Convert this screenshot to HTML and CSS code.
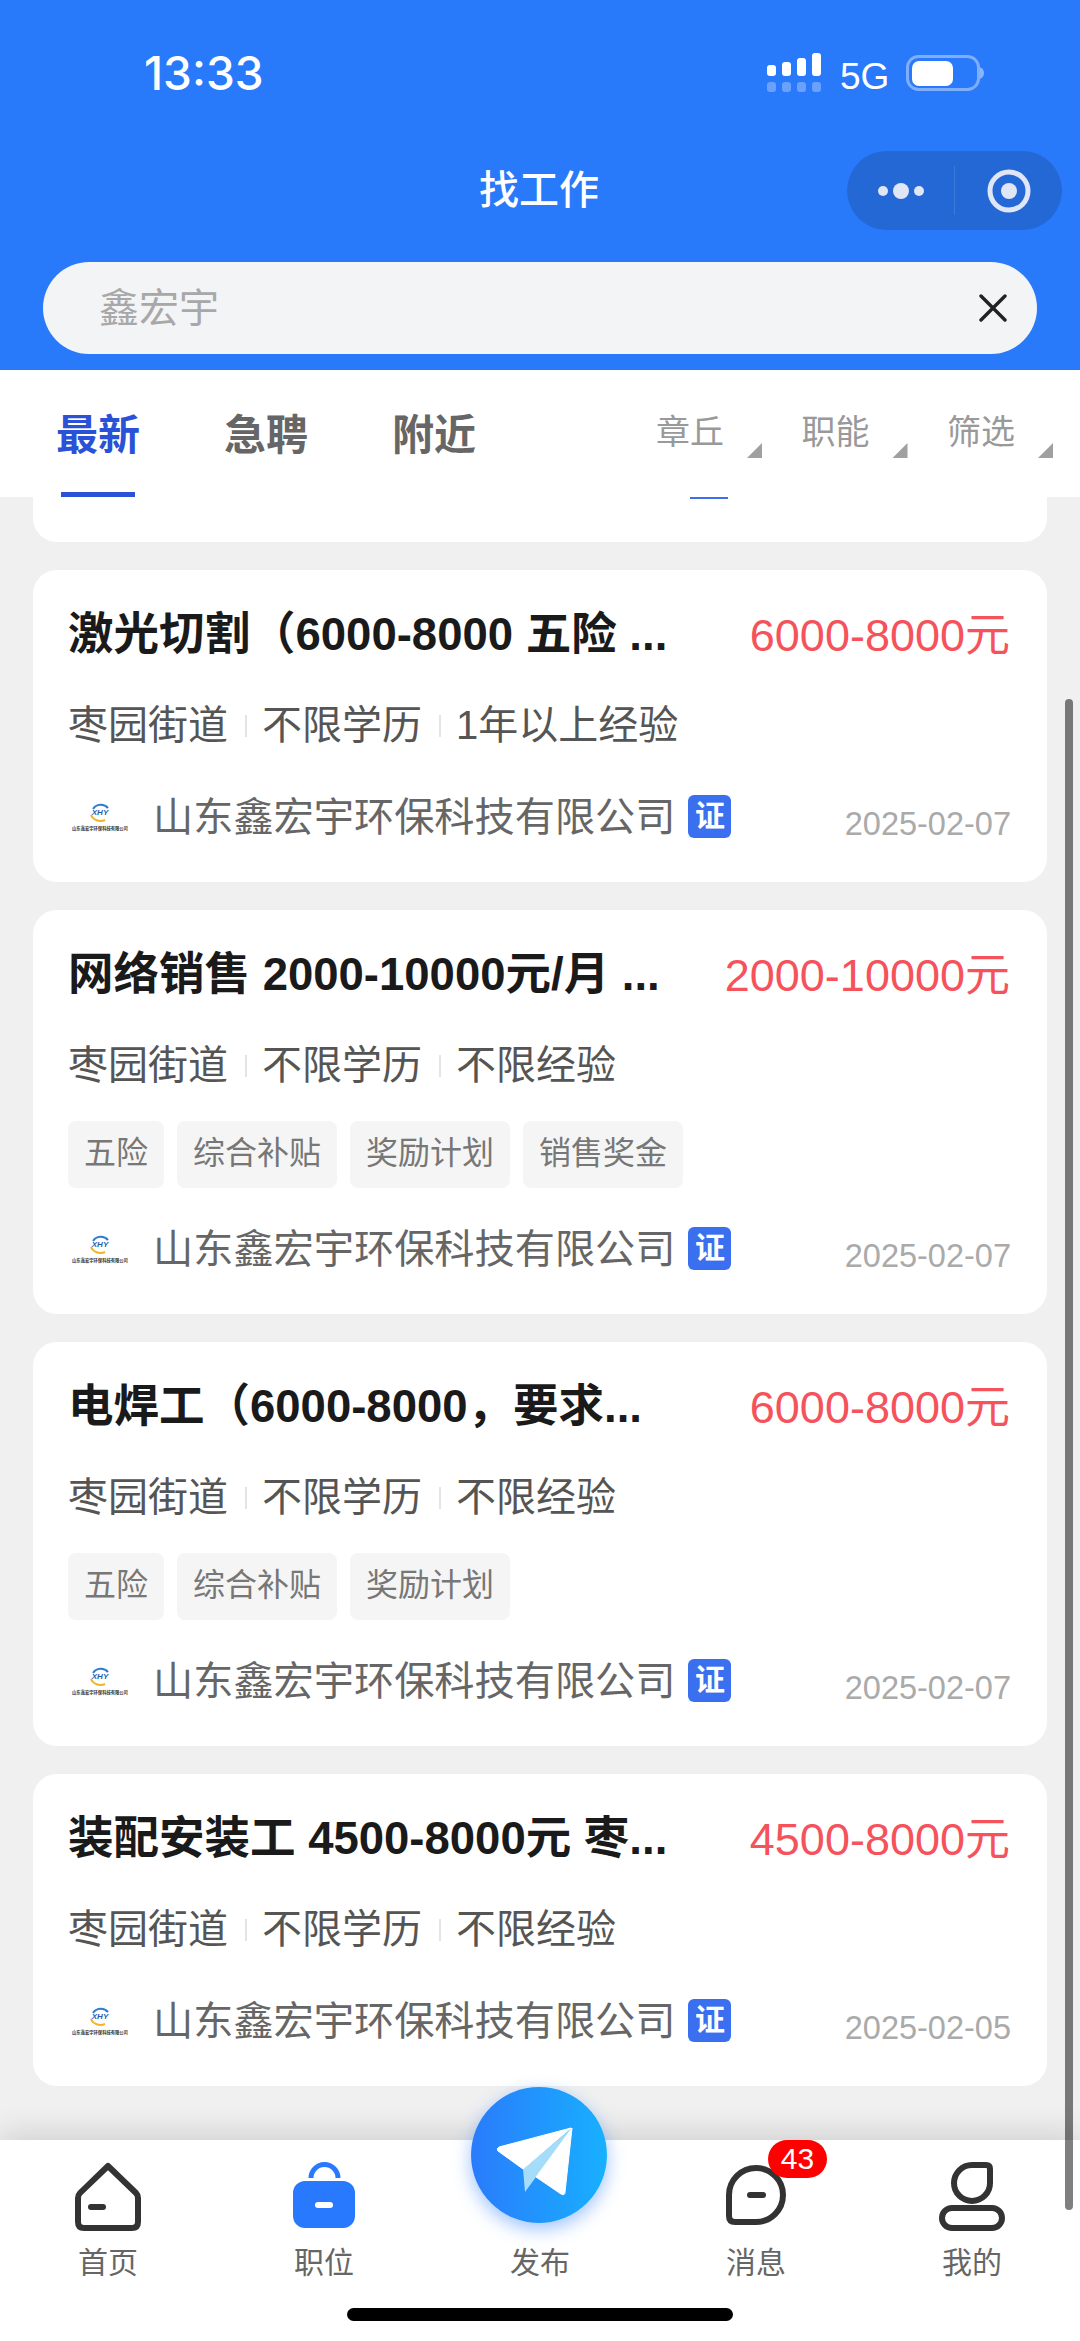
FILE: index.html
```html
<!DOCTYPE html>
<html lang="zh-CN">
<head>
    <meta charset="UTF-8">
    <meta name="viewport" content="width=device-width, initial-scale=1.0">
    <title>找工作</title>
    <link rel="stylesheet" href="styles.css">
</head>
<body>
    <svg class="defs" width="0" height="0">
        <symbol id="emblem" viewBox="0 0 24 20">
            <path d="M5 6 A9 8.5 0 0 1 20 5" fill="none" stroke="#2a7fc9" stroke-width="2"/>
            <path d="M3 12 A10 8.5 0 0 0 17 17" fill="none" stroke="#f0b429" stroke-width="2"/>
        </symbol>
    </svg>

    <div class="page">
        <header class="header">
            <div class="status">
                <span class="time">13:33</span>
                <div class="status-right">
                    <svg class="signal" width="56" height="40" viewBox="0 0 56 40">
                        <g fill="#fff">
                            <rect x="1" y="12" width="9" height="11" rx="3"/>
                            <rect x="16" y="9" width="9" height="14" rx="3"/>
                            <rect x="31" y="5" width="9" height="18" rx="3"/>
                            <rect x="46" y="0" width="9" height="23" rx="3"/>
                        </g>
                        <g fill="#fff" opacity="0.3">
                            <rect x="1" y="29" width="9" height="10" rx="3"/>
                            <rect x="16" y="29" width="9" height="10" rx="3"/>
                            <rect x="31" y="29" width="9" height="10" rx="3"/>
                            <rect x="46" y="29" width="9" height="10" rx="3"/>
                        </g>
                    </svg>
                    <span class="net">5G</span>
                    <svg class="battery" width="79" height="36" viewBox="0 0 79 36">
                        <rect x="1.5" y="1.5" width="71" height="33" rx="11" fill="none" stroke="#fff" stroke-opacity="0.4" stroke-width="3"/>
                        <rect x="6" y="6" width="41" height="25" rx="7" fill="#fff"/>
                        <path d="M74 12 Q78 14 78 18 Q78 22 74 24 Z" fill="#fff" fill-opacity="0.45"/>
                    </svg>
                </div>
            </div>
            <div class="navbar">
                <h1 class="nav-title">找工作</h1>
                <div class="capsule">
                    <svg width="56" height="20" viewBox="0 0 56 20">
                        <g fill="#e0e6f5">
                            <circle cx="9" cy="10" r="5"/>
                            <circle cx="27" cy="10" r="8"/>
                            <circle cx="45" cy="10" r="5"/>
                        </g>
                    </svg>
                    <span class="capsule-line"></span>
                    <svg width="44" height="44" viewBox="0 0 44 44">
                        <circle cx="22" cy="22" r="19" fill="none" stroke="#e0e6f5" stroke-width="5"/>
                        <circle cx="22" cy="22" r="8" fill="#e0e6f5"/>
                    </svg>
                </div>
            </div>
            <div class="search">
                <span class="search-text">鑫宏宇</span>
                <svg width="30" height="28" viewBox="0 0 30 28">
                    <path d="M3 2 L27 26 M27 2 L3 26" stroke="#222" stroke-width="3.4" stroke-linecap="round"/>
                </svg>
            </div>
        </header>

        <nav class="tabs">
            <a class="tab active">最新</a>
            <a class="tab">急聘</a>
            <a class="tab">附近</a>
            <div class="filters">
                <div class="filter"><span>章丘</span><i class="corner"></i></div>
                <div class="filter"><span>职能</span><i class="corner"></i></div>
                <div class="filter"><span>筛选</span><i class="corner"></i></div>
            </div>
        </nav>

        <main class="list">
            <div class="card card-clipped"><span class="clipped-badge"></span></div>

            <div class="card">
                <div class="job-top">
                    <h2 class="job-title">激光切割（6000-8000 五险 ...</h2>
                    <span class="job-pay">6000-8000元</span>
                </div>
                <div class="job-info"><span>枣园街道</span><span>不限学历</span><span>1年以上经验</span></div>
                <div class="job-company">
                    <div class="logo"><svg width="24" height="20"><use href="#emblem"/></svg><b class="logo-mark">XHY</b><span class="logo-name">山东鑫宏宇环保科技有限公司</span></div>
                    <span class="company-name">山东鑫宏宇环保科技有限公司</span>
                    <span class="verified">证</span>
                    <span class="job-date">2025-02-07</span>
                </div>
            </div>

            <div class="card">
                <div class="job-top">
                    <h2 class="job-title">网络销售 2000-10000元/月 ...</h2>
                    <span class="job-pay">2000-10000元</span>
                </div>
                <div class="job-info"><span>枣园街道</span><span>不限学历</span><span>不限经验</span></div>
                <div class="job-tags"><span>五险</span><span>综合补贴</span><span>奖励计划</span><span>销售奖金</span></div>
                <div class="job-company">
                    <div class="logo"><svg width="24" height="20"><use href="#emblem"/></svg><b class="logo-mark">XHY</b><span class="logo-name">山东鑫宏宇环保科技有限公司</span></div>
                    <span class="company-name">山东鑫宏宇环保科技有限公司</span>
                    <span class="verified">证</span>
                    <span class="job-date">2025-02-07</span>
                </div>
            </div>

            <div class="card">
                <div class="job-top">
                    <h2 class="job-title">电焊工（6000-8000，要求...</h2>
                    <span class="job-pay">6000-8000元</span>
                </div>
                <div class="job-info"><span>枣园街道</span><span>不限学历</span><span>不限经验</span></div>
                <div class="job-tags"><span>五险</span><span>综合补贴</span><span>奖励计划</span></div>
                <div class="job-company">
                    <div class="logo"><svg width="24" height="20"><use href="#emblem"/></svg><b class="logo-mark">XHY</b><span class="logo-name">山东鑫宏宇环保科技有限公司</span></div>
                    <span class="company-name">山东鑫宏宇环保科技有限公司</span>
                    <span class="verified">证</span>
                    <span class="job-date">2025-02-07</span>
                </div>
            </div>

            <div class="card">
                <div class="job-top">
                    <h2 class="job-title">装配安装工 4500-8000元 枣...</h2>
                    <span class="job-pay">4500-8000元</span>
                </div>
                <div class="job-info"><span>枣园街道</span><span>不限学历</span><span>不限经验</span></div>
                <div class="job-company">
                    <div class="logo"><svg width="24" height="20"><use href="#emblem"/></svg><b class="logo-mark">XHY</b><span class="logo-name">山东鑫宏宇环保科技有限公司</span></div>
                    <span class="company-name">山东鑫宏宇环保科技有限公司</span>
                    <span class="verified">证</span>
                    <span class="job-date">2025-02-05</span>
                </div>
            </div>
        </main>

        <footer class="tabbar">
            <div class="tabbar-items">
                <a class="bar-item">
                    <svg width="66" height="69" viewBox="0 0 66 69" fill="none" stroke="#333" stroke-width="6" stroke-linecap="round" stroke-linejoin="round">
                        <path d="M33 4 L61 31 Q63 33 63 36 V60 Q63 66 57 66 H9 Q3 66 3 60 V36 Q3 33 5 31 Z"/>
                        <path d="M16 45 H28"/>
                    </svg>
                    <span>首页</span>
                </a>
                <a class="bar-item">
                    <svg width="62" height="69" viewBox="0 0 62 69" fill="none">
                        <path d="M18 16 A13.5 13.5 0 0 1 45 16" stroke="#2979ff" stroke-width="5"/>
                        <rect x="0" y="19" width="62" height="47" rx="12" fill="#2979ff"/>
                        <path d="M25 43 H37" stroke="#fff" stroke-width="6" stroke-linecap="round"/>
                    </svg>
                    <span>职位</span>
                </a>
                <a class="bar-item">
                    <span class="bar-spacer"></span>
                    <span>发布</span>
                </a>
                <a class="bar-item">
                    <svg width="60" height="69" viewBox="0 0 60 69" fill="none" stroke="#333" stroke-width="6" stroke-linecap="round" stroke-linejoin="round">
                        <path d="M3 33 A27 27 0 1 1 30 60 H9 Q3 60 3 54 Z"/>
                        <path d="M24 33 H37"/>
                    </svg>
                    <span>消息</span>
                    <em class="bar-badge">43</em>
                </a>
                <a class="bar-item">
                    <svg width="66" height="69" viewBox="0 0 66 69" fill="none" stroke="#333" stroke-width="6" stroke-linejoin="round">
                        <path d="M33 3 H47 Q51 3 51 7 V21 A18 18 0 1 1 33 3 Z"/>
                        <rect x="3" y="46" width="60" height="20" rx="10"/>
                    </svg>
                    <span>我的</span>
                </a>
            </div>
            <div class="home-bar"></div>
            <button class="publish">
                <svg width="136" height="136" viewBox="0 0 136 136">
                    <path d="M101 41 L52 82 L54 105 L65 90 Z" fill="#a5dcfa"/>
                    <path d="M100 41 L28 60 Q25 62 27 64 L52 82 Z" fill="#fff" stroke="#fff" stroke-linejoin="round"/>
                    <path d="M101 41 L65 90 L90 107 Q94 109 94 105 Z" fill="#fff" stroke="#fff" stroke-linejoin="round"/>
                </svg>
            </button>
        </footer>

        <div class="scrollbar"></div>
    </div>
</body>
</html>
```

FILE: styles.css
```css
* {
    margin: 0;
    padding: 0;
    box-sizing: border-box;
    font-family: "Liberation Sans", "Noto Sans CJK SC", sans-serif;
}

:root {
    --blue: #2979fb;
    --active: #2b51d6;
    --red: #f5525c;
}

body {
    background: #f0f0f0;
}

.defs {
    position: absolute;
}

.page {
    position: relative;
    width: 1080px;
    height: 2341px;
    display: flex;
    flex-direction: column;
    overflow: hidden;
    background: #f0f0f0;
}

/* header */
.header {
    height: 370px;
    flex-shrink: 0;
    background: var(--blue);
    color: white;
}

.status {
    height: 151px;
    padding: 53px 95px 0 144px;
    display: flex;
    justify-content: space-between;
    align-items: flex-start;
}

.time {
    font-family: Inter, sans-serif;
    font-size: 46px;
    font-weight: 500;
    line-height: 40px;
}

.status-right {
    display: flex;
    align-items: flex-start;
    width: 219px;
}

.net {
    margin-left: 18px;
    font-size: 37px;
    line-height: 44px;
    margin-top: 2px;
    width: 49px;
}

.battery {
    margin-left: 17px;
    margin-top: 2px;
}

.navbar {
    position: relative;
    height: 79px;
    display: flex;
    justify-content: flex-end;
    padding-right: 18px;
}

.nav-title {
    position: absolute;
    left: -2px;
    right: 0;
    text-align: center;
    font-size: 40px;
    font-weight: 500;
    line-height: 79px;
}

.capsule {
    width: 215px;
    height: 79px;
    border-radius: 40px;
    background: #2468d6;
    display: flex;
    align-items: center;
    padding-left: 27px;
}

.capsule-line {
    width: 1px;
    height: 49px;
    background: rgba(255,255,255,0.12);
    margin: 0 32px 0 24px;
}

.search {
    margin: 32px 43px 0;
    height: 92px;
    border-radius: 46px;
    background: #f3f4f6;
    display: flex;
    align-items: center;
    justify-content: space-between;
    padding: 0 29px 0 56px;
}

.search-text {
    font-size: 40px;
    color: #a8a8a8;
    margin-bottom: 7px;
}

/* tabs */
.tabs {
    height: 127px;
    flex-shrink: 0;
    background: white;
    display: flex;
    padding-left: 56px;
    gap: 84px;
    position: relative;
    z-index: 2;
}

.tab {
    position: relative;
    font-size: 42px;
    font-weight: 700;
    color: #666;
    line-height: 127px;
    height: 127px;
    margin-top: 2px;
}

.tab.active {
    color: var(--active);
}

.tab.active::after {
    content: "";
    position: absolute;
    left: 5px;
    right: 5px;
    bottom: 2px;
    height: 5px;
    background: var(--active);
}

.filters {
    position: absolute;
    left: 656px;
    top: 40px;
    display: flex;
}

.filter {
    width: 145.5px;
    display: flex;
    align-items: flex-end;
    gap: 23px;
    font-size: 34px;
    color: #999;
    line-height: 44px;
}

.corner {
    width: 15px;
    height: 15px;
    margin-bottom: -4px;
    background: #a0a0a0;
    clip-path: polygon(100% 0, 100% 100%, 0 100%);
}

/* list */
.list {
    flex: 1;
    padding: 0 33px;
    display: flex;
    flex-direction: column;
    gap: 28px;
}

.card {
    background: white;
    border-radius: 24px;
    padding: 36px 37px 42px 35px;
}

.card-clipped {
    height: 45px;
    padding: 0;
    border-radius: 0 0 24px 24px;
    flex-shrink: 0;
}

.clipped-badge {
    display: block;
    width: 38px;
    height: 2px;
    margin-left: 657px;
    background: #3a6ff0;
}

.job-top {
    display: flex;
    justify-content: space-between;
    height: 60px;
    line-height: 60px;
}

.job-title {
    font-size: 45.5px;
    font-weight: 700;
    color: #1a1a1a;
    white-space: nowrap;
    margin-top: -1px;
}

.job-pay {
    font-size: 45px;
    color: var(--red);
    white-space: nowrap;
}

.job-info {
    display: flex;
    margin-top: 34px;
    font-size: 40px;
    line-height: 50px;
    color: #555;
}

.job-info span + span {
    margin-left: 17px;
    padding-left: 17px;
    position: relative;
}

.job-info span + span::before {
    content: "";
    position: absolute;
    left: 0;
    top: 15px;
    width: 2px;
    height: 22px;
    background: #e4e4e4;
}

.job-tags {
    display: flex;
    gap: 13px;
    margin: 31px 0 -6px;
}

.job-tags span {
    height: 67px;
    line-height: 65px;
    padding: 0 16px;
    border-radius: 8px;
    background: #f5f5f5;
    color: #777;
    font-size: 32px;
}

.job-company {
    display: flex;
    align-items: center;
    height: 50px;
    margin-top: 40px;
}

.logo {
    position: relative;
    width: 58px;
    margin-left: 3px;
    margin-top: 4px;
    display: flex;
    flex-direction: column;
    align-items: center;
    gap: 2px;
}

.logo-mark {
    position: absolute;
    top: 5px;
    left: 0;
    right: 0;
    text-align: center;
    font-size: 8px;
    line-height: 10px;
    font-style: italic;
    color: #1f5ea8;
}

.logo-name {
    font-size: 4.3px;
    line-height: 7px;
    white-space: nowrap;
    color: #333;
    font-weight: 700;
}

.company-name {
    margin-left: 24px;
    margin-top: -4px;
    font-size: 40.2px;
    color: #666;
    white-space: nowrap;
}

.verified {
    width: 43px;
    height: 43px;
    margin-left: 13px;
    margin-top: 3px;
    border-radius: 6px;
    background: #3a6ff0;
    color: white;
    font-size: 30px;
    font-weight: 700;
    line-height: 41px;
    text-align: center;
}

.job-date {
    margin-left: auto;
    margin-right: -1px;
    margin-top: 18px;
    font-size: 32.5px;
    color: #aaa;
}

/* bottom bar */
.tabbar {
    position: relative;
    height: 201px;
    flex-shrink: 0;
    background: white;
    box-shadow: 0 -6px 30px rgba(0,0,0,0.14);
}

.tabbar-items {
    display: grid;
    grid-template-columns: repeat(5, 1fr);
    padding: 22px 0 0;
    width: 1080px;
}

.bar-item {
    position: relative;
    display: flex;
    flex-direction: column;
    align-items: center;
    font-size: 30px;
    color: #666;
    line-height: 40px;
}

.bar-item svg,
.bar-spacer {
    height: 69px;
    margin-bottom: 12px;
}

.bar-badge {
    position: absolute;
    left: 120px;
    top: -22px;
    width: 59px;
    height: 38px;
    border-radius: 19px;
    background: #f00;
    color: white;
    font-size: 30px;
    font-style: normal;
    line-height: 38px;
    text-align: center;
}

.home-bar {
    position: absolute;
    left: 347px;
    bottom: 20px;
    width: 386px;
    height: 13px;
    border-radius: 7px;
    background: black;
}

.publish {
    position: absolute;
    left: 471px;
    top: -53px;
    width: 136px;
    height: 136px;
    border: none;
    border-radius: 50%;
    background: linear-gradient(90deg, #2a7bfb, #18b0ff);
    box-shadow: 0 6px 18px rgba(41,121,255,0.45);
}

.publish svg {
    display: block;
}

.scrollbar {
    position: absolute;
    left: 1065px;
    top: 699px;
    width: 8px;
    height: 1511px;
    border-radius: 4px;
    background: rgba(0,0,0,0.5);
    z-index: 3;
}
```
